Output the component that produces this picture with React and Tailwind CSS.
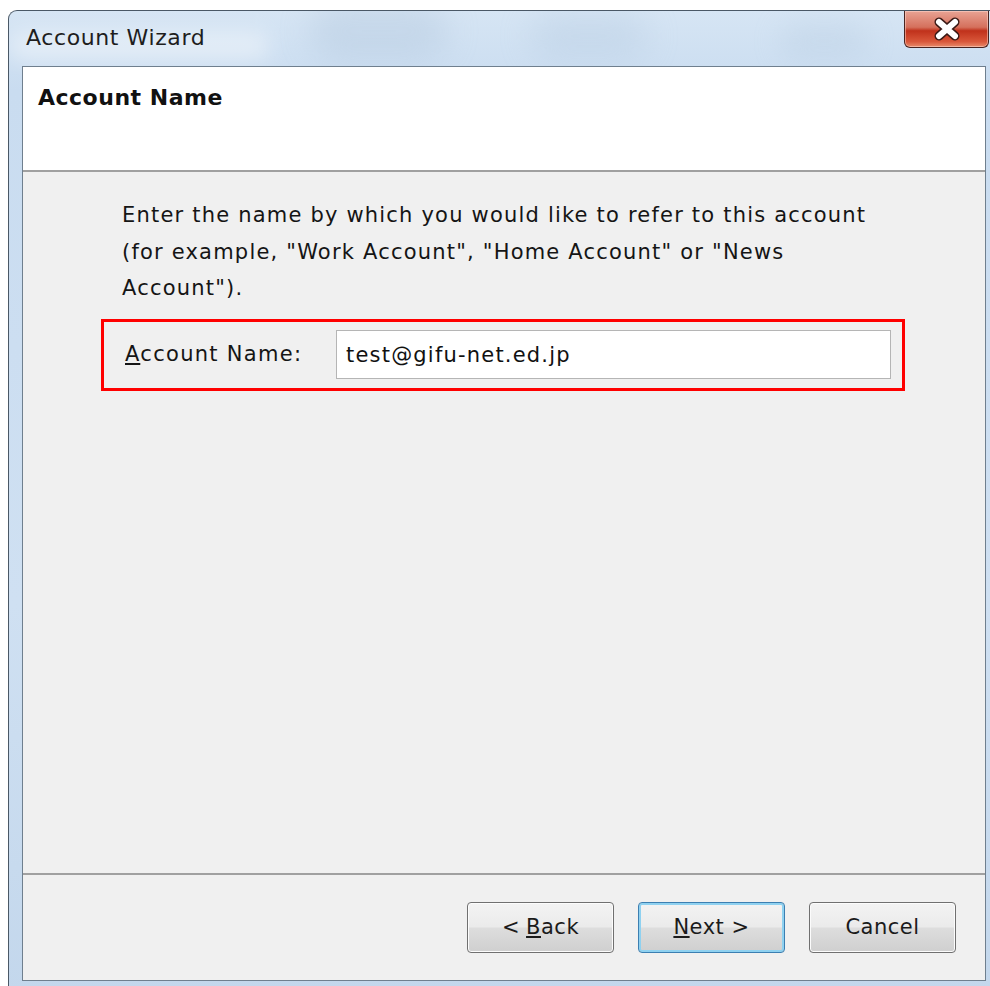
import React, { useState } from 'react';

const font = "font-['DejaVu_Sans',sans-serif]";

// Windows 7 style push button
const WizardButton = ({ children, focused }) => (
  <button
    type="button"
    className={`relative w-[147px] h-[51px] rounded-[4px] border ${
      focused ? 'border-[#3c7fb1] shadow-[inset_0_0_0_2px_#8fd1f0]' : 'border-[#707070] shadow-[inset_0_0_0_1px_#fcfcfc]'
    } bg-[linear-gradient(to_bottom,#f3f3f3_0%,#ebebeb_48%,#dddddd_52%,#cfcfcf_100%)] text-[21px] tracking-[0.5px] text-[#1b1b1b] ${font} flex items-center justify-center`}
  >
    {children}
  </button>
);

const CloseButton = () => (
  <div className="w-[85px] h-[37px] rounded-b-[6px] border border-t-0 border-[#4a2420] bg-[linear-gradient(to_bottom,#e8a394_0%,#d5705c_45%,#c0311b_55%,#d9573a_85%,#e88c6c_100%)] flex items-center justify-center shadow-[inset_0_0_0_1px_rgba(255,220,210,0.5)]">
    <svg width="28" height="24" viewBox="0 0 28 24">
      <path d="M6 5 L22 19 M22 5 L6 19" stroke="#3a1a16" strokeWidth="9" strokeLinecap="round" />
      <path d="M6 5 L22 19 M22 5 L6 19" stroke="#ffffff" strokeWidth="6" strokeLinecap="round" />
    </svg>
  </div>
);

export default function App() {
  const [accountName, setAccountName] = useState('test@gifu-net.ed.jp');

  return (
    <div className={`w-[990px] h-[986px] bg-white overflow-hidden pl-[8px] pt-[10px] ${font}`}>
      {/* window frame */}
      <div className="relative w-[982px] h-[990px] rounded-tl-[9px] border border-r-0 border-[#4a5866] bg-[linear-gradient(to_bottom,#d6e5f4_0%,#c9dcf0_8%,#cfe0f2_60%,#c3d7ec_100%)] overflow-hidden">
        {/* glass streaks in the title bar */}
        <div className="absolute left-[300px] top-[-10px] w-[140px] h-[60px] rounded-full bg-[#9fb6cf] opacity-25 blur-[16px]" />
        <div className="absolute left-[520px] top-[0px] w-[120px] h-[50px] rounded-full bg-[#a9c0d8] opacity-25 blur-[16px]" />
        <div className="absolute left-[770px] top-[10px] w-[90px] h-[40px] rounded-full bg-[#aec4da] opacity-25 blur-[14px]" />
        <div className="absolute left-[0px] top-[20px] w-[260px] h-[30px] rounded-full bg-white opacity-40 blur-[10px]" />

        {/* title bar */}
        <div className="relative h-[55px] flex items-start justify-between">
          <div className="pl-[17px] pt-[12px] text-[22px] leading-[30px] tracking-[0.6px] text-[#1e1e1e]">Account Wizard</div>
          <div className="mr-[1px]">
            <CloseButton />
          </div>
        </div>

        {/* client area */}
        <div className="relative ml-[13px] w-[964px] h-[915px] border border-[#6f7f8e] bg-[#f0f0f0] flex flex-col">
          <div className="h-[105px] bg-white border-b-2 border-b-[#a0a0a0] px-[15px] pt-[16px]">
            <h1 className="text-[22px] leading-[30px] tracking-[0.5px] font-bold text-[#111]">Account Name</h1>
          </div>

          <div className="flex-1 pt-[25px] pl-[99px] pr-[80px]">
            <p className="text-[21px] leading-[36.5px] tracking-[1.2px] text-[#151515] w-[760px]">
              Enter the name by which you would like to refer to this account (for example, "Work Account", "Home Account" or "News Account").
            </p>

            <div className="mt-[12px] -ml-[21px] w-[804px] h-[72px] border-[3px] border-[#ff0000] flex items-center pl-[21px] pr-[11px]">
              <label className="w-[211px] text-[21px] tracking-[1.3px] text-[#151515]">
                <u>A</u>ccount Name:
              </label>
              <input
                value={accountName}
                onChange={(e) => setAccountName(e.target.value)}
                className="flex-1 h-[49px] border border-[#b5b5b5] bg-white px-[9px] text-[21px] tracking-[1.2px] text-[#111] outline-none"
              />
            </div>
          </div>

          <div className="h-[107px] border-t-2 border-t-[#a0a0a0] flex justify-end items-start pt-[27px] pr-[29px] gap-[24px]">
            <WizardButton>
              &lt; <u className="ml-[6px]">B</u>ack
            </WizardButton>
            <WizardButton focused>
              <u>N</u>ext &gt;
            </WizardButton>
            <WizardButton>Cancel</WizardButton>
          </div>
        </div>
      </div>
    </div>
  );
}
